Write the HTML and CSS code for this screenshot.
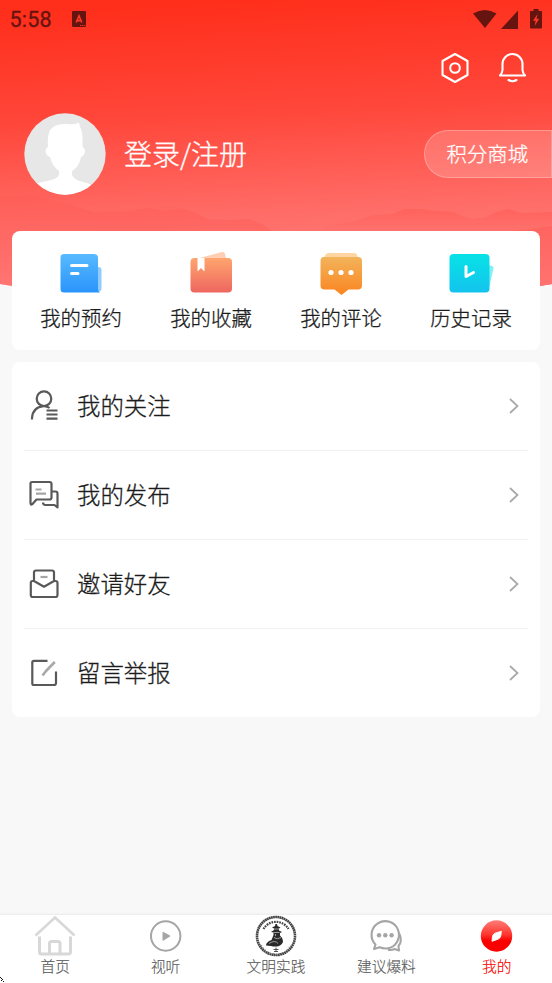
FILE: index.html
```
<!DOCTYPE html>
<html lang="zh-CN">
<head>
<meta charset="utf-8">
<title>我的</title>
<link rel="stylesheet" href="styles.css">
</head>
<body>
<div class="screen">
  <svg class="backdrop" viewBox="0 0 552 310" aria-hidden="true">
    <defs>
      <linearGradient id="sky" gradientUnits="userSpaceOnUse" x1="276" y1="0" x2="292" y2="310"><stop offset="0" stop-color="#ff2f1b"/><stop offset=".36" stop-color="#ff473b"/><stop offset=".7" stop-color="#ff6e69"/><stop offset="1" stop-color="#ff8582"/></linearGradient>
      <linearGradient id="hill" gradientUnits="userSpaceOnUse" x1="0" y1="195" x2="0" y2="290"><stop offset="0" stop-color="#ff5d57"/><stop offset="1" stop-color="#ff7371"/></linearGradient>
      <linearGradient id="far" gradientUnits="userSpaceOnUse" x1="0" y1="207" x2="0" y2="232"><stop offset="0" stop-color="#ff615b"/><stop offset="1" stop-color="#ff726e"/></linearGradient>
      <clipPath id="curve"><path d="M0 0H552V284Q276 330 0 284Z"/></clipPath>
    </defs>
    <g clip-path="url(#curve)">
      <rect width="552" height="310" fill="url(#sky)"/>
      <path d="M0 197L30 195L62 203L78 207L94 212L130 211L148 208L166 211L182 208L196 213L208 219L226 220L250 219L262 224L274 232V310H0Z" fill="url(#hill)" opacity=".75"/>
      <path d="M325 226L355 221L374 215L392 214L405 209L420 209L436 211L453 212L462 216L473 219L486 217L497 212L508 209L521 213L552 212V310H325Z" fill="url(#far)"/>
      <path d="M480 234L530 229L552 226V310H480Z" fill="url(#hill)"/>
    </g>
  </svg>

  <header class="status">
    <span class="clock">5:58</span>
    <svg class="app-mark" viewBox="0 0 14 16"><rect width="14" height="16" rx="1.2" fill="#65140f"/><path d="M4.200 11.500L7 4.800L9.800 11.500M5.100 9.600H8.900" fill="none" stroke="#ff3827" stroke-width="1.6"/><path d="M8 14.500h1.200M10.200 14.500h1.200M12.300 14.500h1" stroke="#ff3827"/></svg>
    <svg class="signals" viewBox="0 0 70 20" fill="#65140f"><path d="M0 4.500Q12 -2.500 23.500 4.500L12 19Z"/><path d="M45 1.500V20H28Z"/><path d="M60.500 0h5v2h2.500a1 1 0 0 1 1 1V18.500a1 1 0 0 1-1 1H58a1 1 0 0 1-1-1V3a1 1 0 0 1 1-1h2.500Z"/><path d="M64.500 5L60 11.700H62.600L61.700 17L66.200 9.800H63.500Z" fill="#ff3827"/></svg>
  </header>

  <div class="tools">
    <svg class="tool" viewBox="0 0 30 32"><path d="M15 2L27.500 9V23L15 30L2.500 23V9Z"/><circle cx="15" cy="16" r="4.800"/></svg>
    <svg class="tool" viewBox="0 0 30 32"><path d="M5.500 18V12a10 10 0 0 1 20 0V18Q25.700 21 28 23.500H3Q5.300 21 5.500 18Z"/><path d="M11.500 28Q15.500 30.500 19.500 28"/></svg>
  </div>

  <section class="profile">
    <svg class="avatar" viewBox="0 0 82 82"><defs><clipPath id="round"><circle cx="41" cy="41" r="40.700"/></clipPath></defs><g clip-path="url(#round)"><rect width="82" height="82" fill="#e7e7e7"/><path d="M24 34Q23 23 26 17Q31 10 43 11Q51 12 55 9.500L56 14Q59 18 58.500 34Q61 35 61 38.500Q60 43 57 44Q55 54 48 58V62Q50 67 59 69Q68 71 73 76V84H7V74Q10 70 21 68.500Q33 66.500 35 62V58Q28 53 26 44Q22 43 21.500 38Q21.500 35 24 34Z" fill="#fff"/></g></svg>
    <span class="login">登录/注册</span>
    <span class="points">积分商城</span>
  </section>

  <section class="card shortcuts">
    <div class="shortcut">
      <svg class="pic" viewBox="0 0 48 48"><defs><linearGradient id="b" x2="0" y2="1"><stop stop-color="#58baff"/><stop offset="1" stop-color="#2a94fb"/></linearGradient></defs><path d="M36 17h3.500q3 0 3 3V38.500q0 3-3 3H36Z" fill="#92ccff"/><path d="M5 4H35q4 0 4 4V38.500q0 3 2 4H5q-3.500 0-3.500-3.500V7.500Q1.500 4 5 4Z" fill="url(#b)"/><path d="M12.500 15.500H28M12.500 23.500H19" stroke="#fff" stroke-width="3" stroke-linecap="round"/></svg>
      <span>我的预约</span>
    </div>
    <div class="shortcut">
      <svg class="pic" viewBox="0 0 48 48"><defs><linearGradient id="r" x2="0" y2="1"><stop stop-color="#ffa56e"/><stop offset="1" stop-color="#ed665f"/></linearGradient></defs><path d="M7 9L33 2q2.500-.5 3 1.500L37.500 12H7Z" fill="#ffcfb4"/><rect x="1.500" y="8" width="41.500" height="34.500" rx="4" fill="url(#r)"/><path d="M8.500 8H15.500V21.500L12 18L8.500 21.500Z" fill="#fff"/></svg>
      <span>我的收藏</span>
    </div>
    <div class="shortcut">
      <svg class="pic" viewBox="0 0 48 48"><defs><linearGradient id="o" x2="0" y2="1"><stop stop-color="#f2b45b"/><stop offset="1" stop-color="#fb8420"/></linearGradient></defs><path d="M5 8L6 5.500Q7 3 9 3H35Q37.500 3 38 5L39.500 9H5Z" fill="#ffd6a1"/><path d="M5 7H39q4 0 4 4V35.500q0 4-4 4H29.500L22.500 45L15.500 39.500H5.500q-4 0-4-4V11Q1.500 7 5 7Z" fill="url(#o)"/><g fill="#fff"><circle cx="12" cy="22.500" r="2.600"/><circle cx="22" cy="22.500" r="2.600"/><circle cx="32" cy="22.500" r="2.600"/></g></svg>
      <span>我的评论</span>
    </div>
    <div class="shortcut">
      <svg class="pic" viewBox="0 0 48 48"><defs><linearGradient id="c" x2="0" y2="1"><stop stop-color="#07e2e6"/><stop offset="1" stop-color="#13c4ed"/></linearGradient></defs><path d="M38 14.500L43 16q2 .5 1.500 2.500L40.500 36L38 39Z" fill="#83f0f3"/><rect x=".5" y="4" width="40" height="38.500" rx="4" fill="url(#c)"/><path d="M17 16.500V26.500L24.500 22.500" fill="none" stroke="#fff" stroke-width="3" stroke-linecap="round" stroke-linejoin="round"/></svg>
      <span>历史记录</span>
    </div>
  </section>

  <section class="card menu">
    <div class="row">
      <svg class="glyph" viewBox="0 0 32 32"><circle cx="16" cy="8.700" r="7.300"/><path d="M4 29.500V28Q5 17 15.500 16.200Q19 16 21.500 18M18.500 20.500H29.500M18.500 24.500H29.500M18.500 28.700H29.500"/></svg>
      <span class="label">我的关注</span>
      <svg class="chevron" viewBox="0 0 10 16"><path d="M1 1L8.500 8L1 15"/></svg>
    </div>
    <div class="row">
      <svg class="glyph" viewBox="0 0 32 32"><path d="M4 3H21.500q2 0 2 2V18.500q0 2-2 2H8.500L4.500 25Q2.500 26.500 2.500 24V4.500Q2.500 3 4 3ZM23.500 12.500H27.500q2 0 2 2V28.500L26.500 26H17Q15 25.500 15 23.500"/><path class="soft" d="M7.500 10.500H13.500M8 14.700H18"/></svg>
      <span class="label">我的发布</span>
      <svg class="chevron" viewBox="0 0 10 16"><path d="M1 1L8.500 8L1 15"/></svg>
    </div>
    <div class="row">
      <svg class="glyph" viewBox="0 0 32 32"><path d="M6 14V4.500q0-2 2-2H24q2 0 2 2V14M6 13H4.500q-1.700 0-1.700 2V27q0 2 2 2H27.500q2 0 2-2V15q0-2-2-2H26L16 18.700Z"/><path class="soft" d="M12.500 9H19.500"/></svg>
      <span class="label">邀请好友</span>
      <svg class="chevron" viewBox="0 0 10 16"><path d="M1 1L8.500 8L1 15"/></svg>
    </div>
    <div class="row">
      <svg class="glyph" viewBox="0 0 32 32"><path d="M19.500 3.800H6q-1.700 0-1.700 1.700V26.500q0 1.500 1.700 1.500H26q2 0 2-2V14.500"/><path class="pen" d="M26.800 5L18 14L14.500 18.500"/></svg>
      <span class="label">留言举报</span>
      <svg class="chevron" viewBox="0 0 10 16"><path d="M1 1L8.500 8L1 15"/></svg>
    </div>
  </section>

  <nav class="tabs">
    <div class="tab">
      <svg class="tab-icon" viewBox="0 0 42 42"><g fill="none" stroke="#d8d8d8" stroke-width="3"><path d="M1.500 20.500L21 2.500L40.500 20.500" stroke-width="2.600"/><path d="M5.500 21.500V37q0 2 2 2H34q2.500 0 2.500-2V21.500M15.500 39V28.500q0-2 2-2H24q2 0 2 2V39"/></g></svg>
      <span>首页</span>
    </div>
    <div class="tab">
      <svg class="tab-icon" viewBox="0 0 42 42"><circle cx="20.700" cy="21" r="14.700" fill="none" stroke="#a5a5a5" stroke-width="2"/><path d="M18 17.300L25 21L18 25.300Z" fill="#a5a5a5" stroke="#a5a5a5" stroke-linejoin="round"/></svg>
      <span>视听</span>
    </div>
    <div class="tab">
      <svg class="tab-icon" viewBox="0 0 42 42"><circle cx="21" cy="21" r="19" fill="#fff" stroke="#444" stroke-width="2.600" stroke-dasharray="1.800 .35"/><path d="M8.500 14A14.500 14.500 0 0 1 33.500 14" fill="none" stroke="#444" stroke-width="2.200" stroke-dasharray="1.700 .9"/><path d="M6.500 30A16 16 0 0 0 35.500 30" fill="none" stroke="#777" stroke-width="1.200" stroke-dasharray="1 2"/><path d="M20.500 9L22 9L22.500 11L25.500 12.500L24 13.500V15.500L27 17L25 18V20.500Q28 23 28 26Q28 29 24 31Q20 32 16 31L11 30.500Q11 27 16.500 25L18.500 20V17.500L16 17L19 15V13.500L17 12.500L20 11Z" fill="#2b2b2b"/><path d="M19 14H24M18.500 17.500H24.500M19 22.500Q22 25 26 22.500M14 28.500Q20 24.500 23 28.500M20.500 19V21" stroke="#bbb" stroke-width=".8" fill="none"/><path d="M18.500 34.500H23.500M21 32.500V37M19 36.500H23" stroke="#444" stroke-width=".9"/></svg>
      <span>文明实践</span>
    </div>
    <div class="tab">
      <svg class="tab-icon" viewBox="0 0 42 42"><g fill="none" stroke="#a5a5a5" stroke-width="2.100" stroke-linejoin="round"><path d="M10.500 29.500L9 34L14.500 32.300Q18.500 33.900 22.500 33.400A13.700 13.700 0 1 0 10.500 29.500Z"/><path d="M34.500 19Q37.500 26.500 33.500 31L34 35.500L29.500 34Q26.500 35.500 23 34.800"/></g><g fill="#a5a5a5"><circle cx="14" cy="20.300" r="2.200"/><circle cx="20.300" cy="20.300" r="2.200"/><circle cx="26.600" cy="20.300" r="2.200"/></g></svg>
      <span>建议爆料</span>
    </div>
    <div class="tab active">
      <svg class="tab-icon" viewBox="0 0 42 42"><defs><linearGradient id="m" x2="0" y2="1"><stop stop-color="#ff7d77"/><stop offset=".45" stop-color="#ff3730"/><stop offset=".65" stop-color="#f90000"/><stop offset="1" stop-color="#fa0000"/></linearGradient></defs><circle cx="20.500" cy="21" r="15.700" fill="url(#m)"/><path d="M25.300 16.300L24.800 20.500Q24.300 22.500 22.500 24L16 26.300L16.500 21.500Q17 19.500 18.500 18.400Z" fill="#fff" stroke="#fff" stroke-linejoin="round"/></svg>
      <span>我的</span>
    </div>
  </nav>
  <svg class="corner-mark" viewBox="0 0 5 6"><path d="M0 .5H1M1 1.500H2M2 2.500H3M1 3.500H2M3 4.500H4" stroke="#111" shape-rendering="crispEdges"/></svg>
</div>
</body>
</html>
```
FILE: styles.css
```
* { box-sizing: border-box; }
body { margin: 0; }
.screen {
  position: relative;
  display: flex;
  flex-direction: column;
  width: 552px;
  height: 983px;
  overflow: hidden;
  background: #f8f8f8;
  color: #1c1c1c;
  font-family: "Noto Sans CJK SC", sans-serif;
  font-weight: 300;
  -webkit-text-stroke: .3px currentColor;
}
.screen > * { position: relative; flex-shrink: 0; }
svg { display: block; flex-shrink: 0; }
.screen > .backdrop { position: absolute; top: 0; left: 0; width: 552px; height: 310px; }

.status { display: flex; align-items: center; height: 38px; padding: 0 9px 0 9.500px; color: #65140f; }
.clock { width: 62.500px; font: 400 21.500px/38px Roboto, sans-serif; letter-spacing: .2px; padding-top: 1px; }
.app-mark { width: 14px; height: 16px; margin-bottom: 1px; }
.signals { width: 70px; height: 20px; margin-left: auto; margin-bottom: 1px; }

.tools { display: flex; justify-content: flex-end; align-items: center; gap: 27px; height: 60px; padding-right: 25px; }
.tool { width: 30px; height: 32px; fill: none; stroke: #fff; stroke-width: 2.100; stroke-linejoin: round; stroke-linecap: round; }

.profile { display: flex; align-items: center; height: 112px; padding-left: 23.500px; color: #fff; }
.avatar { width: 82px; height: 82px; }
.login { margin-left: 18.500px; padding-bottom: 3px; font-size: 28px; line-height: 40px; }
.points {
  width: 128.500px;
  height: 48px;
  margin-left: auto;
  padding-left: 22px;
  border: 1px solid rgba(255, 255, 255, .27);
  border-radius: 24px 0 0 24px;
  background: rgba(255, 255, 255, .18);
  font-size: 20.400px;
  line-height: 44px;
}

.card { margin: 0 12px; border-radius: 8px; background: #fff; }
.shortcuts { display: grid; grid-template-columns: repeat(4, 1fr); height: 119.500px; margin-top: 20.500px; padding: 19px 4px 0 4px; }
.shortcut { display: flex; flex-direction: column; align-items: center; font-size: 20.400px; line-height: 30px; }
.pic { width: 48px; height: 48px; margin-left: 4px; margin-bottom: 4px; }

.menu { margin-top: 11.500px; padding: 0 12px; height: 355.500px; }
.row { display: flex; align-items: center; height: 89px; padding: 0 9px 0 4px; border-bottom: 1px solid #f1f1f1; }
.row:last-child { border: 0; height: 88px; }
.glyph { width: 32px; height: 32px; fill: none; stroke: #595959; stroke-width: 2.200; stroke-linejoin: round; }
.soft { stroke: #a5a5a5; }
.pen { stroke: #a8a8a8; stroke-width: 2.600; }
.label { flex: 1; margin-left: 17px; padding-bottom: 2px; font-size: 23.400px; line-height: 34px; }
.chevron { width: 10px; height: 16px; fill: none; stroke: #aaa; stroke-width: 1.800; }

.tabs { display: grid; grid-template-columns: repeat(5, 1fr); height: 68px; margin-top: auto; background: #fff; box-shadow: 0 -1px 2px rgba(0, 0, 0, .06); }
.tab { display: flex; flex-direction: column; align-items: center; color: #5a5a5a; font-size: 14.700px; line-height: 20px; -webkit-text-stroke-width: .15px; }
.tab-icon { width: 42px; height: 42px; margin-bottom: -1px; }
.active { color: #f90000; }
.screen > .corner-mark { position: absolute; left: 0; bottom: 0; width: 5px; height: 6px; }
```
